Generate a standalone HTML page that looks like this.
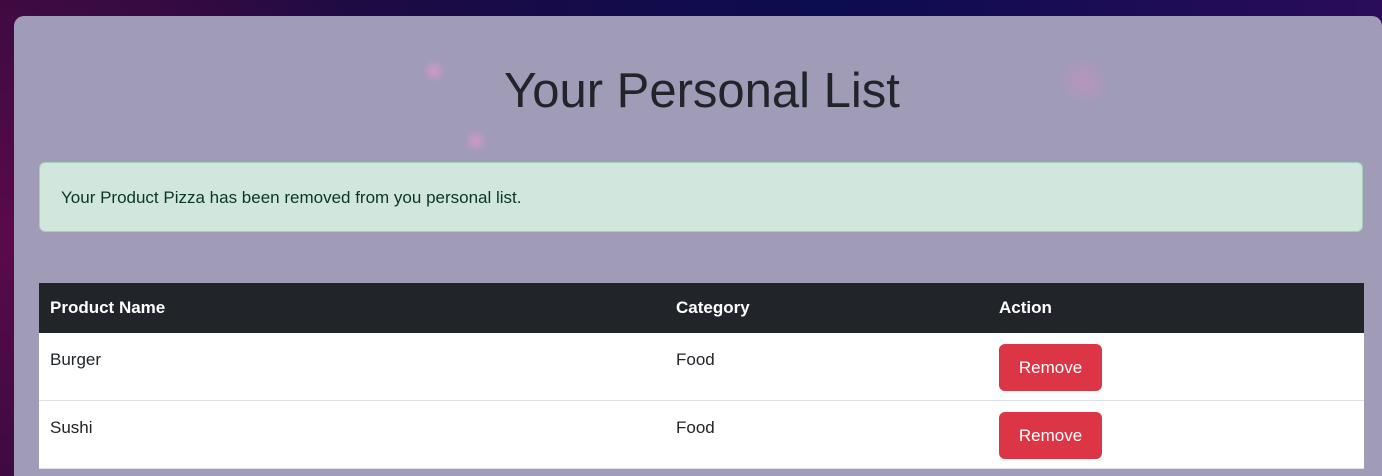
<!DOCTYPE html>
<html><head><style>
html,body{margin:0;width:1382px;height:476px;overflow:hidden;font-family:"Liberation Sans",sans-serif;}
body{position:relative;background:radial-gradient(circle at 0% 50%,#5a0a4a 0,transparent 30%),linear-gradient(90deg,#2a0a3a,#0c0c50 60%,#2a0c5a);}
.card{position:absolute;left:14px;top:16px;width:1368px;height:460px;border-radius:10px 10px 0 0;background:#a09bb7;overflow:hidden;}
.card:before{content:"";position:absolute;inset:0;background:radial-gradient(circle at 420px 55px,rgba(240,150,210,.6) 0,transparent 12px),radial-gradient(circle at 462px 125px,rgba(240,150,210,.6) 0,transparent 12px),radial-gradient(circle at 1070px 65px,rgba(220,140,200,.4) 0,transparent 25px);}
h1{position:absolute;left:0;width:1376px;top:47px;margin:0;text-align:center;font-weight:400;font-size:49px;color:#212529;}
.alert{position:absolute;left:25px;top:146px;width:1322px;height:68px;background:#d1e7dd;border:1px solid #a3cfbb;border-radius:6px;color:#0a3622;font-size:17px;line-height:70px;}
.alert span{padding-left:21px;}
table{position:absolute;left:25px;top:267px;width:1325px;border-collapse:collapse;font-size:17px;color:#212529;}
th{background:#212529;color:#fff;text-align:left;height:50px;padding:0 11px;font-weight:700;}
td{background:#fff;height:67px;padding:0 11px;vertical-align:top;border-bottom:1px solid #dee2e6;}
td .t{display:block;margin-top:17px;}
.btn{display:inline-block;margin-top:11px;background:#dc3545;color:#fff;border-radius:6px;width:103px;height:47px;line-height:47px;text-align:center;font-size:17px;}
</style></head><body>
<div class="card">
<h1>Your Personal List</h1>
<div class="alert"><span>Your Product Pizza has been removed from you personal list.</span></div>
<table>
<tr><th style="width:604px">Product Name</th><th style="width:301px">Category</th><th>Action</th></tr>
<tr><td><span class="t">Burger</span></td><td><span class="t">Food</span></td><td><span class="btn">Remove</span></td></tr>
<tr><td><span class="t">Sushi</span></td><td><span class="t">Food</span></td><td><span class="btn">Remove</span></td></tr>
</table>
</div>
</body></html>
